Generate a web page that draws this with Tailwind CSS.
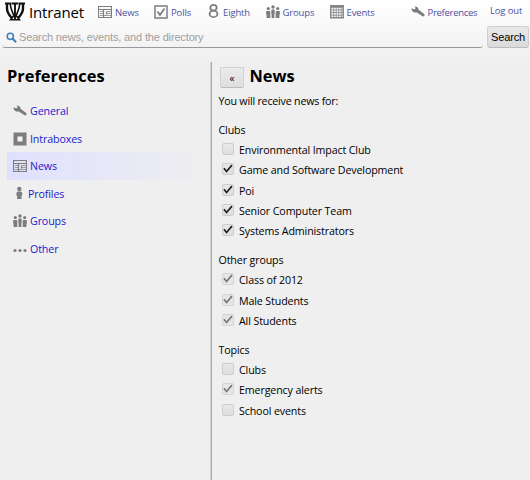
<!DOCTYPE html>
<html lang="en">
<head>
<meta charset="utf-8">
<title>Intranet - Preferences</title>
<script src="https://cdn.jsdelivr.net/npm/@tailwindcss/browser@4"></script>
</head>
<body class="w-[530px] h-[480px] overflow-hidden bg-[#efefef] font-['Open_Sans','Noto_Sans',sans-serif] text-[10.667px] tracking-[-0.12px] text-black">
<svg class="hidden">
  <symbol id="news" viewBox="0 0 14 14"><path d="M.5 1.500h13v11H.500zM.5 4.500h13M5.500 4.500v8M8.500 6.500v3" fill="none" stroke="#7d7d7d" stroke-width="1.200"/><path d="M2 6.500h3M2 8.500h3M2 10.500h3M6 10.500h7M9 6.500h4M9 8.500h4" fill="none" stroke="#9c9c9c" stroke-width="1"/></symbol>
  <symbol id="wrench" viewBox="0 0 14 14"><path d="M.8 3.200 3.200 4.500 4.700 3.300 3.600 1.500C5.800 1.200 7.500 2.500 7.600 4.800L13.200 9C14.200 10.200 13 12 11.500 11.300L5.900 7.400C3.600 8.100 1 6.700.5 4.400z" fill="#7b7b7b"/></symbol>
  <symbol id="people" viewBox="0 0 14 14"><g fill="#7d7d7d"><circle cx="7" cy="2" r="1.700"/><circle cx="2.300" cy="3.600" r="1.600"/><circle cx="11.700" cy="3.600" r="1.600"/><path d="M5.900 4.500h2.200q.6.200.6.900v3.300H8.400V13H5.600V8.700h-.3V5.400q0-.7.6-.9M.9 6h2.700q.7.200.7.900V13H.6V9.500H.1V6.900Q.1 6 .9 6M10.400 6h2.700q.8.200.8.900v2.600h-.5V13H9.700V6.900q0-.7.7-.9"/></g></symbol>
  <symbol id="tick" viewBox="0 0 13 13"><path d="m2.100 5.700 2.800 3.500 5.900-6.900" fill="none" stroke="currentColor" stroke-width="1.850"/></symbol>
</svg>

<header class="h-[62px] bg-linear-to-b from-white to-[#efefef]">
  <div class="h-[26px] flex items-start text-[9.500px] tracking-[-0.15px] leading-[25px] text-[#5050a0]">
    <a class="flex w-[98px] pl-[5px] text-black text-[15px] leading-[25px]">
      <svg class="w-5 h-5 mt-[2px] mr-[4px] shrink-0" viewBox="0 0 20 20" fill="none" stroke="#111"><path d="M0 1.500h6.500M7 1.500h6M13.500 1.500H20" stroke-width="2"/><path d="M2 2v4.500C2 11 4.500 13.500 7.200 16.500M18 2v4.500C18 11 15.500 13.500 12.800 16.500" stroke-width="2.400"/><path d="M5.300 2C5.300 7 7.500 10 9.500 15M14.700 2C14.700 7 12.500 10 10.500 15" stroke-width="1.600"/><path d="M10 2v15" stroke-width="1.900"/><path d="M5.500 17.800h9L12 14.500H8z" stroke-width="1.500"/></svg>
      <span class="tracking-[-0.15px]">Intranet</span>
    </a>
    <a class="flex w-[56px]"><svg class="w-[14px] h-[14px] mt-[5px] mr-[3px]"><use href="#news"/></svg>News</a>
    <a class="flex w-[53px]"><svg class="w-[14px] h-[14px] mt-[5px] mr-[3px]" viewBox="0 0 14 14" fill="none" stroke="#7d7d7d"><path d="M1 1h12v12H1z" stroke-width="1.500"/><path d="m3.500 6.500 2.500 3.500 4.500-6.500" stroke-width="1.800"/></svg>Polls</a>
    <a class="flex w-[59px]"><svg class="w-[14px] h-[14px] mt-[4px] mr-[2px]" viewBox="0 0 14 14" fill="none" stroke="#7d7d7d" stroke-width="1.800"><ellipse cx="6.500" cy="3.800" rx="3.200" ry="2.900"/><ellipse cx="6.500" cy="9.900" rx="3.900" ry="3.200"/></svg>Eighth</a>
    <a class="flex w-[64px]"><svg class="w-[14px] h-[14px] mt-[5px] mr-[2.500px]"><use href="#people"/></svg>Groups</a>
    <a class="flex w-[81px]"><svg class="w-[14px] h-[14px] mt-[5px] mr-[2.500px]" viewBox="0 0 14 14" fill="none" stroke="#858585"><path d="M.75.75h12.500v12H.750zM1 2h12" stroke-width="1.400"/><path d="M1 5h12M1 7.500h12M1 10.200h12M3.700 2v11M6.200 2v11M8.700 2v11M11.200 2v11" stroke-width=".8"/></svg>Events</a>
    <a class="flex w-[79px] tracking-[-0.28px]"><svg class="w-[14px] h-[14px] mt-[5px] mr-[2.500px]"><use href="#wrench"/></svg>Preferences</a>
    <a class="leading-[21px] whitespace-nowrap">Log out</a>
  </div>
  <form class="flex pl-[2px] gap-[4px] font-['Liberation_Sans',sans-serif]">
    <div class="w-[481px] h-[22px] flex items-center rounded-[3px] border-b border-[#999] text-[#a0a0a0] text-[11px] tracking-[-0.150px] leading-[22px]">
      <svg class="w-[11px] h-[11px] ml-[4px] mr-[2px] mt-px" viewBox="0 0 11 11" fill="none" stroke="#3a7fc0"><circle cx="4.300" cy="4.300" r="3.100" stroke-width="1.500"/><path d="m6.500 6.500 3.600 3.700" stroke-width="2"/></svg>
      <span>Search news, events, and the directory</span>
    </div>
    <button type="button" class="w-[42px] h-[22px] rounded-[3px] border border-[#cfcfcf] border-b-[#bbb] bg-linear-to-b from-[#e9e9e9] to-[#dadada] text-[11px] tracking-[-0.15px] leading-[20px]">Search</button>
  </form>
</header>

<main class="flex h-[418px]">
  <aside class="w-[210px] pl-[7px]">
    <h1 class="text-[16.400px] leading-[24px] font-bold mt-[2px] tracking-normal">Preferences</h1>
    <nav class="mt-[9px] text-[#1a1acc] leading-[28.500px]">
      <a class="flex h-[27.500px] pl-[6px]"><svg class="w-[14px] h-[14px] mt-[7px] mr-[3px]"><use href="#wrench"/></svg>General</a>
      <a class="flex h-[27.500px] pl-[6px]"><svg class="w-[14px] h-[14px] mt-[7px] mr-[3px]" viewBox="0 0 14 14"><path d="M2.500 2.500h9v9h-9z" fill="#f4f4f4" stroke="#7d7d7d" stroke-width="4"/></svg>Intraboxes</a>
      <a class="flex h-[27.500px] pl-[6px] bg-linear-to-r from-[#e0e0ff] to-[#efefef]"><svg class="w-[14px] h-[14px] mt-[7px] mr-[3px]"><use href="#news"/></svg>News</a>
      <a class="flex h-[27.500px] pl-[6px]"><svg class="w-[13px] h-[14px] mt-[6px] mr-[2px]" viewBox="0 0 13 14" fill="#7d7d7d"><circle cx="6.300" cy="3" r="2.200"/><path d="M4.800 5.500h3q1.400.4 1.400 2v2h-.7V13H4.100V9.500h-.7v-2q0-1.600 1.400-2"/></svg>Profiles</a>
      <a class="flex h-[27.500px] pl-[6px]"><svg class="w-[14px] h-[14px] mt-[7px] mr-[3px]"><use href="#people"/></svg>Groups</a>
      <a class="flex h-[27.500px] pl-[6px]"><svg class="w-[14px] h-[14px] mt-[7px] mr-[3px]" viewBox="0 0 14 14" fill="#7d7d7d"><circle cx="2" cy="8.500" r="1.600"/><circle cx="7" cy="8.500" r="1.600"/><circle cx="12" cy="8.500" r="1.600"/></svg>Other</a>
    </nav>
  </aside>
  <div class="w-[2px] bg-linear-to-r from-[#d0d0d0] from-50% to-[#aaa] to-50%"></div>
  <section class="flex-1 pl-[6.500px]">
    <div class="flex items-center h-[29px]">
      <button type="button" class="w-[24px] h-[21px] mt-[2px] ml-[1.500px] mr-[5.500px] rounded-[2px] border border-[#d0d0d0] border-b-[#bcbcbc] bg-linear-to-b from-[#ebebeb] to-[#dedede] text-[10px] leading-[20px]">«</button>
      <h2 class="text-[16.400px] leading-[24px] -mt-px font-bold tracking-normal">News</h2>
    </div>
    <p class="leading-[20px] tracking-[-0.2px]">You will receive news for:</p>

    <h3 class="mt-[9px] leading-[20px]">Clubs</h3>
    <label class="flex h-[20.250px] items-center pl-[3.500px]"><i class="size-[12px] mr-[5px] mb-[2px] rounded-[2px] border border-[#cdcdcd] bg-linear-to-b from-[#e8e8e8] to-[#dedede]"></i>Environmental Impact Club</label>
    <label class="flex h-[20.250px] items-center pl-[3.500px]"><i class="size-[12px] mr-[5px] mb-[2px] rounded-[2px] border border-[#cdcdcd] bg-linear-to-b from-[#e8e8e8] to-[#dedede]"><svg class="size-[12px] -m-px text-[#202020]"><use href="#tick"/></svg></i>Game and Software Development</label>
    <label class="flex h-[20.250px] items-center pl-[3.500px]"><i class="size-[12px] mr-[5px] mb-[2px] rounded-[2px] border border-[#cdcdcd] bg-linear-to-b from-[#e8e8e8] to-[#dedede]"><svg class="size-[12px] -m-px text-[#202020]"><use href="#tick"/></svg></i>Poi</label>
    <label class="flex h-[20.250px] items-center pl-[3.500px]"><i class="size-[12px] mr-[5px] mb-[2px] rounded-[2px] border border-[#cdcdcd] bg-linear-to-b from-[#e8e8e8] to-[#dedede]"><svg class="size-[12px] -m-px text-[#202020]"><use href="#tick"/></svg></i>Senior Computer Team</label>
    <label class="flex h-[20.250px] items-center pl-[3.500px]"><i class="size-[12px] mr-[5px] mb-[2px] rounded-[2px] border border-[#cdcdcd] bg-linear-to-b from-[#e8e8e8] to-[#dedede]"><svg class="size-[12px] -m-px text-[#202020]"><use href="#tick"/></svg></i>Systems Administrators</label>

    <h3 class="mt-[9px] leading-[20px]">Other groups</h3>
    <label class="flex h-[20.250px] items-center pl-[3.500px]"><i class="size-[12px] mr-[5px] mb-[2px] rounded-[2px] border border-[#d4d4d4] bg-[#e6e6e6]"><svg class="size-[12px] -m-px text-[#777]"><use href="#tick"/></svg></i>Class of 2012</label>
    <label class="flex h-[20.250px] items-center pl-[3.500px]"><i class="size-[12px] mr-[5px] mb-[2px] rounded-[2px] border border-[#d4d4d4] bg-[#e6e6e6]"><svg class="size-[12px] -m-px text-[#777]"><use href="#tick"/></svg></i>Male Students</label>
    <label class="flex h-[20.250px] items-center pl-[3.500px]"><i class="size-[12px] mr-[5px] mb-[2px] rounded-[2px] border border-[#d4d4d4] bg-[#e6e6e6]"><svg class="size-[12px] -m-px text-[#777]"><use href="#tick"/></svg></i>All Students</label>

    <h3 class="mt-[9px] leading-[20px]">Topics</h3>
    <label class="flex h-[20.250px] items-center pl-[3.500px]"><i class="size-[12px] mr-[5px] mb-[2px] rounded-[2px] border border-[#cdcdcd] bg-linear-to-b from-[#e8e8e8] to-[#dedede]"></i>Clubs</label>
    <label class="flex h-[20.250px] items-center pl-[3.500px]"><i class="size-[12px] mr-[5px] mb-[2px] rounded-[2px] border border-[#d4d4d4] bg-[#e6e6e6]"><svg class="size-[12px] -m-px text-[#777]"><use href="#tick"/></svg></i>Emergency alerts</label>
    <label class="flex h-[20.250px] items-center pl-[3.500px]"><i class="size-[12px] mr-[5px] mb-[2px] rounded-[2px] border border-[#cdcdcd] bg-linear-to-b from-[#e8e8e8] to-[#dedede]"></i>School events</label>
  </section>
</main>
</body>
</html>
